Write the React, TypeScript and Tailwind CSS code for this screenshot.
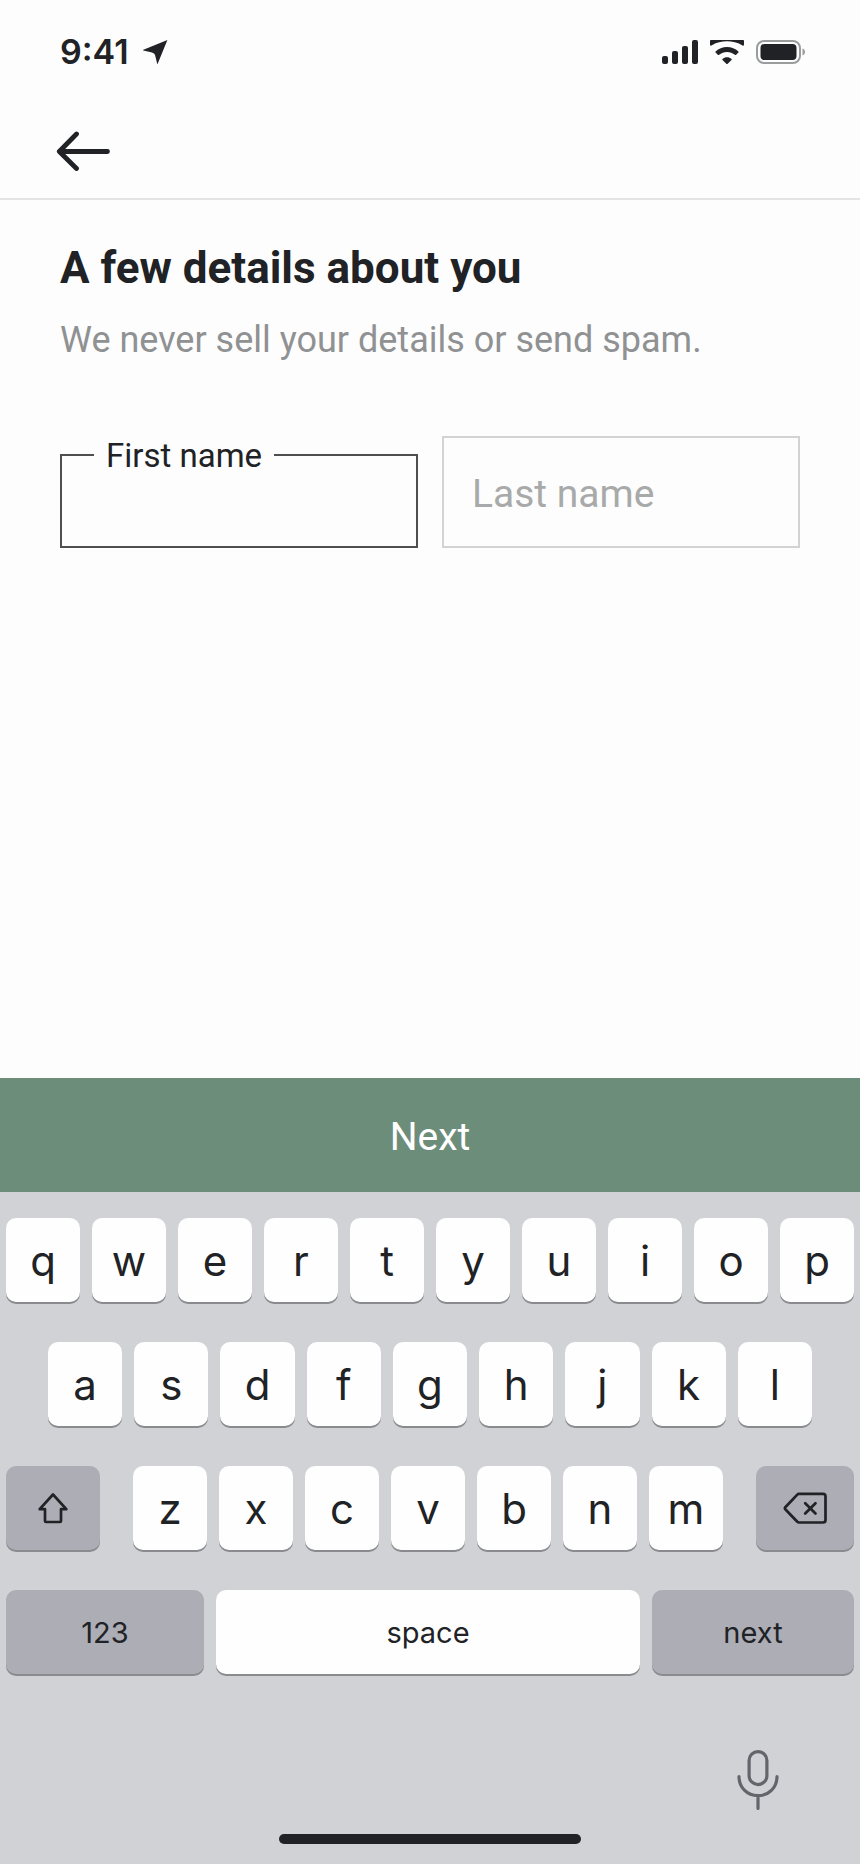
import React, { useState } from "react";

function StatusBar() {
  return (
    <div className="flex h-[104px] items-center justify-between pl-[60px] pr-[54px]">
      <div className="flex items-center gap-3.5">
        <span className="text-[34px] leading-10 font-semibold">9:41</span>
        <svg className="h-6 w-[25px]" viewBox="0 0 25 24" fill="currentColor" aria-hidden="true">
          <path d="M24.4 0 14.8 23.6c-.2.4-.6.4-.7 0L12.600 17.200c-.5-2.600-1.200-3.900-3.600-4.600L.4 10.400c-.5-.1-.5-.5 0-.7Z" />
        </svg>
      </div>
      <div className="flex items-center gap-3">
        <svg className="h-6 w-9" viewBox="0 0 36 24" fill="currentColor" aria-hidden="true">
          <rect x="0" y="16" width="6" height="8" rx="2" />
          <rect x="10" y="11" width="6" height="13" rx="2" />
          <rect x="20" y="6" width="6" height="18" rx="2" />
          <rect x="30" y="0" width="6" height="24" rx="2" />
        </svg>
        <svg className="h-6 w-[34px]" viewBox="0 0 34 24" fill="currentColor" aria-hidden="true">
          <path d="M0 1.500V.6Q0 0 1 0H33q1 0 1 .6V4.600q0 1.200-1 1.200l-1.400-.7C27.500 2.500 22.500 1.300 17 1.300S6.500 2.500 2.400 5.100L1 5.800Q0 5.800 0 4.600Z" />
          <path d="M5.600 11.400C8.600 8.600 12.600 7 17 7s8.400 1.600 11.400 4.400c.4.400.4.800 0 1.200l-2.200 2.200c-.4.400-.9.400-1.300 0C22.700 12.900 20 11.900 17 11.900s-5.700 1-7.900 2.900c-.4.400-.9.400-1.300 0l-2.200-2.200c-.4-.4-.4-.8 0-1.200Z" />
          <path d="M12.500 19c1.200-1.100 2.800-1.700 4.500-1.700s3.300.6 4.500 1.700c.3.300.3.700 0 1l-3.800 3.700c-.4.400-1 .4-1.400 0L12.500 20c-.3-.3-.3-.7 0-1Z" />
        </svg>
        <svg className="h-6 w-[50px]" viewBox="0 0 50 24" aria-hidden="true">
          <rect x="1" y="1" width="43" height="22" rx="7" fill="none" stroke="#9b9c9d" strokeWidth="2" />
          <rect x="4.500" y="4" width="36" height="16" rx="4" fill="#202225" />
          <path d="M46.500 8.500c1.600.6 2.500 1.900 2.500 3.500s-.9 2.900-2.500 3.500Z" fill="#9b9c9d" />
        </svg>
      </div>
    </div>
  );
}

type KeyProps = {
  children: React.ReactNode;
  onPress: () => void;
  dark?: boolean;
  small?: boolean;
  label?: string;
};

function Key({ children, onPress, dark = false, small = false, label }: KeyProps) {
  return (
    <button
      type="button"
      aria-label={label}
      onClick={onPress}
      className={`flex h-[84px] min-w-0 flex-1 items-center justify-center rounded-[10px] shadow-[0_2px_0_#8a8b8f] ${
        dark ? "bg-[#acadb5]" : "bg-[#fefefe]"
      } ${small ? "pt-0.5 text-[29px]" : "text-[42px]"}`}
    >
      {children}
    </button>
  );
}

function Keyboard({ onType, onDelete, onNext }: { onType: (s: string) => void; onDelete: () => void; onNext: () => void }) {
  const letters = (row: string) =>
    row.split("").map((c) => (
      <Key key={c} onPress={() => onType(c)}>
        {c}
      </Key>
    ));
  return (
    <section aria-label="Keyboard" className="bg-[#d1d2d6] pt-[26px]">
      <div className="flex flex-col gap-10">
        <div className="flex gap-3 px-1.5">{letters("qwertyuiop")}</div>
        <div className="flex gap-3 px-12">{letters("asdfghjkl")}</div>
        <div className="grid grid-cols-[94fr_590fr_98fr] gap-[33px] px-1.5">
          <Key dark label="Shift" onPress={() => undefined}>
            <svg className="h-8 w-8" viewBox="0 0 32 32" fill="none" stroke="currentColor" strokeWidth="2.700" strokeLinejoin="round" aria-hidden="true">
              <path d="M16 2.500 29.300 17.200H24V29q0 1-1 1H9q-1 0-1-1V17.200H2.700Z" />
            </svg>
          </Key>
          <div className="flex min-w-0 gap-3">{letters("zxcvbnm")}</div>
          <Key dark label="Delete" onPress={onDelete}>
            <svg className="h-8 w-11" viewBox="0 0 44 32" fill="none" stroke="currentColor" strokeWidth="2.700" strokeLinecap="round" strokeLinejoin="round" aria-hidden="true">
              <path d="M16 1.800H40q2.500 0 2.500 2.500V28q0 2.500-2.500 2.500H16q-1 0-1.700-.8L2.300 17.200q-.8-1 0-2L14.300 2.600q.7-.8 1.700-.8Z" />
              <path d="m22.200 11.200 10.300 10.300M32.500 11.200 22.200 21.500" />
            </svg>
          </Key>
        </div>
        <div className="grid grid-cols-[198fr_424fr_202fr] gap-3 px-1.5">
          <Key dark small onPress={() => undefined}>
            123
          </Key>
          <Key small onPress={() => onType(" ")}>
            space
          </Key>
          <Key dark small onPress={onNext}>
            next
          </Key>
        </div>
      </div>
      <div className="flex justify-end pt-[76px] pr-20">
        <button type="button" aria-label="Dictate" className="text-[#62666a]">
          <svg className="h-[62px] w-11" viewBox="0 0 44 62" fill="none" stroke="currentColor" strokeWidth="3.200" strokeLinecap="round" aria-hidden="true">
            <rect x="13.100" y="1.600" width="17.800" height="33" rx="8.900" />
            <path d="M3 26.500c0 11 8 19.200 19 19.200S41 37.500 41 26.500M22 45.700V58.500" />
          </svg>
        </button>
      </div>
      <div className="flex justify-center pt-[22px] pb-5">
        <div className="h-2.5 w-[302px] rounded-full bg-[#202225]" />
      </div>
    </section>
  );
}

export default function App() {
  const [first, setFirst] = useState("");
  const [last, setLast] = useState("");
  const [active, setActive] = useState<"first" | "last">("first");
  const update = active === "first" ? setFirst : setLast;
  const next = () => setActive("last");

  return (
    <div className="flex min-h-screen flex-col bg-[#fdfdfd] font-['Inter',sans-serif] text-[#202225]">
      <StatusBar />
      <header className="flex h-24 items-center border-b-2 border-[#e4e4e5] px-14">
        <button type="button" aria-label="Back">
          <svg className="h-10 w-[54px]" viewBox="0 0 54 40" fill="none" stroke="currentColor" strokeWidth="4.800" strokeLinecap="round" strokeLinejoin="round" aria-hidden="true">
            <path d="M51.500 20.500H3.500M20.500 3 3.300 20.500 20.500 37.500" />
          </svg>
        </button>
      </header>
      <main className="flex-1 px-[60px] pt-11 font-['Roboto',sans-serif]">
        <h1 className="text-[44px] leading-[48px] font-bold">A few details about you</h1>
        <p className="mt-6 text-[36px] leading-[48px] text-[#8f9192]">We never sell your details or send spam.</p>
        <form className="mt-[72px] grid grid-cols-2 gap-6" onSubmit={(e) => e.preventDefault()}>
          <fieldset className="h-28 min-w-0 border-2 border-[#4e4f50]">
            <legend className="ml-8 px-3 pt-0.5 text-[33px] leading-9">
              <label htmlFor="first-name">First name</label>
            </legend>
            <input
              id="first-name"
              type="text"
              value={first}
              onFocus={() => setActive("first")}
              onChange={(e) => setFirst(e.target.value)}
              className="h-14 w-full bg-transparent px-7 text-[39px] outline-none"
            />
          </fieldset>
          <input
            type="text"
            aria-label="Last name"
            placeholder="Last name"
            value={last}
            onFocus={() => setActive("last")}
            onChange={(e) => setLast(e.target.value)}
            className="h-28 min-w-0 border-2 border-[#d2d3d3] bg-transparent px-7 pt-1 text-[39px] outline-none placeholder:text-[#a8aaaa]"
          />
        </form>
      </main>
      <button type="button" onClick={next} className="h-[114px] bg-[#6c8d7a] pt-1 font-['Roboto',sans-serif] text-[39px] text-white">
        Next
      </button>
      <Keyboard onType={(s) => update((v) => v + s)} onDelete={() => update((v) => v.slice(0, -1))} onNext={next} />
    </div>
  );
}
